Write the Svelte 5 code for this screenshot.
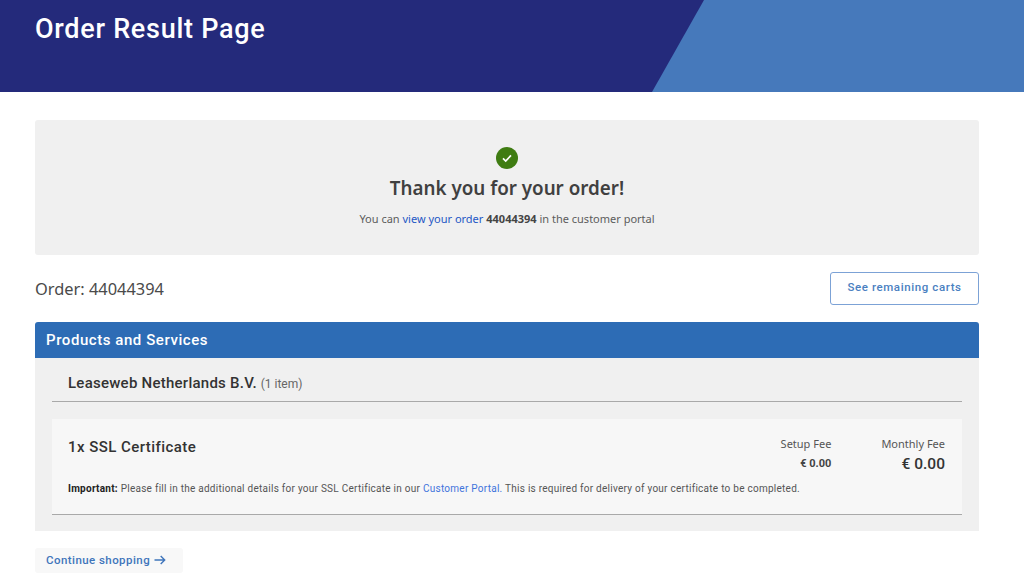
<script>
	const orderId = '44044394';
</script>

<header class="hero">
	<h1>Order Result Page</h1>
</header>

<main class="page">
	<section class="notice">
		<span class="check">
			<svg width="12" height="12" viewBox="0 0 12 12" aria-hidden="true">
				<path d="M2 6.4 4.7 9 10 3.4" fill="none" stroke="#fff" stroke-width="1.7" />
			</svg>
		</span>
		<h2>Thank you for your order!</h2>
		<p>You can <a href="#order">view your order</a> <b>{orderId}</b> in the customer portal</p>
	</section>

	<div class="order-row">
		<span class="order-no">Order: {orderId}</span>
		<button class="outline">See remaining carts</button>
	</div>

	<section class="panel">
		<div class="panel-head">Products and Services</div>
		<div class="panel-body">
			<div class="seller"><strong>Leaseweb Netherlands B.V.</strong> <span>(1 item)</span></div>
			<div class="item">
				<div class="item-top">
					<div class="item-name">1x SSL Certificate</div>
					<div class="fee setup">
						<div class="fee-label">Setup Fee</div>
						<div class="fee-value">€ 0.00</div>
					</div>
					<div class="fee monthly">
						<div class="fee-label">Monthly Fee</div>
						<div class="fee-value">€ 0.00</div>
					</div>
				</div>
				<p class="important">
					<b>Important:</b> Please fill in the additional details for your SSL Certificate in our
					<a href="#portal">Customer Portal.</a> This is required for delivery of your certificate to be completed.
				</p>
			</div>
		</div>
	</section>

	<button class="continue">
		Continue shopping
		<svg width="12" height="10" viewBox="0 0 12 10" aria-hidden="true">
			<path d="M.5 5h10M6.7 1l4 4-4 4" fill="none" stroke="currentColor" stroke-width="1.4" />
		</svg>
	</button>
</main>

<style>
	:global(body) {
		margin: 0;
		background: #fff;
		font-family: Roboto, 'Liberation Sans', sans-serif;
		color: #3c3c3c;
	}

	.hero {
		position: relative;
		height: 92px;
		background: #242a7b;
		overflow: hidden;
		box-sizing: border-box;
		padding: 12px 35px 0;
	}

	.hero::after {
		content: '';
		position: absolute;
		inset: 0;
		background: #4679bb;
		clip-path: polygon(704px 0, 100% 0, 100% 100%, 652px 100%);
	}

	h1 {
		margin: 0;
		font-size: 27px;
		line-height: 34px;
		font-weight: 500;
		letter-spacing: 0.72px;
		color: #fff;
	}

	.page {
		padding: 28px 45px 0 35px;
	}

	.notice {
		height: 135px;
		box-sizing: border-box;
		padding-top: 27px;
		background: #f0f0f0;
		border-radius: 3px;
		text-align: center;
		font-family: 'Noto Sans', 'Open Sans', sans-serif;
	}

	.check {
		display: flex;
		align-items: center;
		justify-content: center;
		width: 22px;
		height: 22px;
		margin: 0 auto;
		border-radius: 50%;
		background: #3f7c12;
	}

	h2 {
		margin: 6px 0 0;
		font-size: 18.8px;
		line-height: 26px;
		font-weight: 600;
		color: #404040;
	}

	.notice p {
		margin: 9px 0 0;
		font-size: 11px;
		line-height: 18px;
		color: #5c5c5c;
	}

	.notice a {
		color: #2457c5;
		text-decoration: none;
	}

	.notice b {
		font-weight: 700;
		color: #444;
	}

	.order-row {
		display: flex;
		align-items: center;
		justify-content: space-between;
		margin-top: 17px;
	}

	.order-no {
		font-family: 'Noto Sans', 'Open Sans', sans-serif;
		font-size: 16.4px;
		color: #4a4a4a;
	}

	.outline {
		width: 149px;
		height: 33px;
		padding: 0 0 3px;
		background: #fff;
		border: 1px solid #7ca2d6;
		border-radius: 3px;
		font: 500 11.5px Roboto, sans-serif;
		letter-spacing: 0.6px;
		color: #4a7fc1;
	}

	.panel {
		margin-top: 17px;
	}

	.panel-head {
		height: 36px;
		box-sizing: border-box;
		padding-left: 11px;
		background: #2d6cb5;
		border-radius: 3px 3px 0 0;
		font-size: 15px;
		font-weight: 500;
		line-height: 36px;
		letter-spacing: 0.56px;
		color: #fff;
	}

	.panel-body {
		height: 173px;
		box-sizing: border-box;
		padding: 0 17px;
		background: #f0f0f0;
	}

	.seller {
		height: 44px;
		box-sizing: border-box;
		padding-left: 16px;
		border-bottom: 1px solid #a9a9a9;
		line-height: 51px;
		font-size: 15px;
		color: #333;
	}

	.seller strong {
		font-weight: 500;
		letter-spacing: 0.25px;
	}

	.seller span {
		font-size: 12px;
		color: #666;
	}

	.item {
		height: 96px;
		box-sizing: border-box;
		margin-top: 17px;
		padding: 18px 17px 0 16px;
		background: #f7f7f7;
		border-bottom: 1px solid #a9a9a9;
	}

	.item-top {
		display: flex;
		align-items: flex-start;
		height: 45px;
	}

	.item-name {
		flex: 1;
		font-size: 15px;
		font-weight: 500;
		line-height: 20px;
		letter-spacing: 0.45px;
		color: #333;
	}

	.fee {
		text-align: right;
	}

	.setup {
		margin-right: 50px;
	}

	.fee-label {
		font-family: 'Noto Sans', 'Open Sans', sans-serif;
		font-size: 11px;
		line-height: 14px;
		color: #555;
	}

	.setup .fee-value {
		margin-top: 6px;
		font-size: 11px;
		line-height: 14px;
		font-weight: 700;
		color: #444;
	}

	.monthly .fee-value {
		margin-top: 3px;
		font-size: 15.5px;
		line-height: 20px;
		font-weight: 500;
		color: #333;
	}

	.important {
		margin: 0;
		font-size: 10px;
		line-height: 14px;
		letter-spacing: 0.26px;
		color: #555;
	}

	.important b {
		font-weight: 700;
		color: #222;
	}

	.important a {
		color: #3f74dc;
		text-decoration: none;
	}

	.continue {
		display: flex;
		align-items: center;
		gap: 4px;
		width: 148px;
		height: 25px;
		margin-top: 17px;
		padding: 0 0 1px 11px;
		background: #f8f8f8;
		border: 0;
		border-radius: 3px;
		font: 500 11.5px Roboto, sans-serif;
		letter-spacing: 0.44px;
		color: #3f75bb;
	}
</style>
